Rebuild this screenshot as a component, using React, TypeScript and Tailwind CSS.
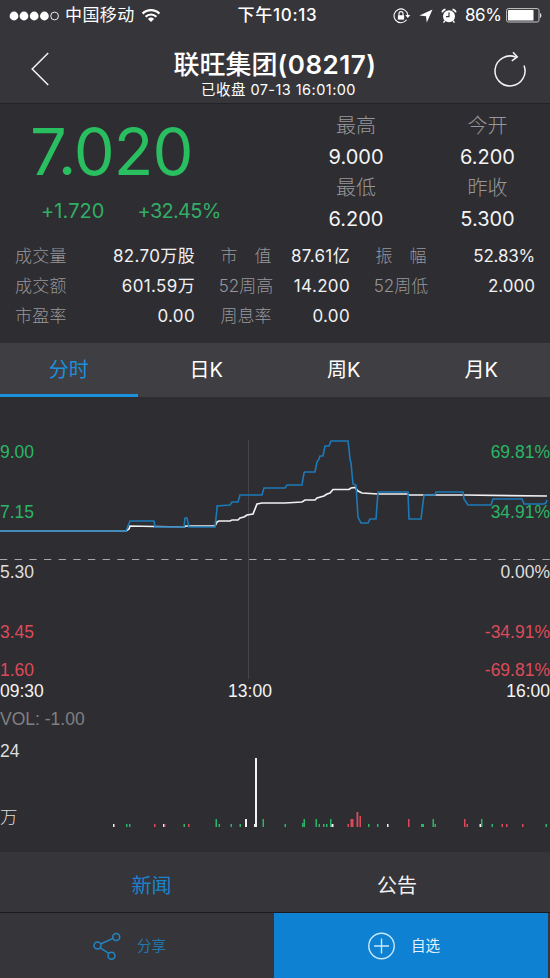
import { useState } from 'react'

const GREEN = '#2bb566'
const RED = '#dc4b5a'
const WHITE = '#f1f1f3'

const quotes = [
  { label: '最高', value: '9.000' },
  { label: '今开', value: '6.200' },
  { label: '最低', value: '6.200' },
  { label: '昨收', value: '5.300' },
]

const stats = [
  ['成交量', '82.70万股', '市\u2003值', '87.61亿', '振\u2003幅', '52.83%'],
  ['成交额', '601.59万', '52周高', '14.200', '52周低', '2.000'],
  ['市盈率', '0.00', '周息率', '0.00', '', ''],
]

const periods = ['分时', '日K', '周K', '月K']

const axisLabels = [
  { y: 61, left: '9.00', right: '69.81%', color: GREEN },
  { y: 121, left: '7.15', right: '34.91%', color: GREEN },
  { y: 181, left: '5.30', right: '0.00%', color: '#dededf' },
  { y: 241, left: '3.45', right: '-34.91%', color: RED },
  { y: 279, left: '1.60', right: '-69.81%', color: RED },
]

const priceLine =
  '0,134 126,134 130,124 154,124 155,130 184,130 185,121 187,121 189,130 215,130 217,112 217,109 230,108 232,105 238,105 240,98 241,98 262,98 264,91 285,91 287,88 302,88 304,76 305,75 315,75 317,65 319,62 320,59 323,59 325,49 329,49 331,44 348,44 349,52 350,62 351,66 353,87 356,88 358,120 361,126 368,126 370,122 376,122 378,95 408,95 409,122 421,122 424,98 435,98 436,95 463,95 464,102 468,108 491,108 493,102 522,102 524,107 544,107 546,106 547,103'

const averageLine =
  '0,134 126,134 129,132 130,129 154,129.5 184,130 186,129 215,129 217,125 219,124 230,124 232,123 238,123 240,121 244,120 247,118 253,117 257,107 262,106 285,106 302,105 305,103 315,103 317,101 324,99 327,97 330,96 333,92.5 349,92.5 351,91 355,90.5 358,94 362,96 378,97 408,97 409,98 464,98 547,99'

// x, top, width, color (bars stand on y = 430)
const volumeBars: [number, number, number, string][] = [
  [113, 427, 1.5, WHITE],
  [126, 427, 1.5, GREEN],
  [129, 427, 1.5, GREEN],
  [154, 427, 1.5, RED],
  [163, 427, 1.5, WHITE],
  [164.5, 427, 1, RED],
  [183.5, 427, 1.5, GREEN],
  [188, 427, 1.5, RED],
  [215.5, 422, 1.5, GREEN],
  [218.5, 427, 1.5, GREEN],
  [230.5, 427, 1.5, GREEN],
  [239.5, 427, 1.5, GREEN],
  [245, 422, 2, WHITE],
  [255, 361, 2, WHITE],
  [254, 427, 3, WHITE],
  [262.5, 422, 1.5, GREEN],
  [284.5, 427, 1.5, GREEN],
  [302, 426, 1.5, GREEN],
  [303.5, 422, 1.5, GREEN],
  [315.5, 422, 1.5, GREEN],
  [318.5, 427, 1.5, GREEN],
  [323, 427, 1.5, GREEN],
  [326, 427, 1.5, GREEN],
  [330, 422, 1.5, GREEN],
  [331.5, 427, 2, WHITE],
  [347.5, 427, 1.5, RED],
  [350.5, 422, 3, RED],
  [356.5, 415, 1.8, RED],
  [359.5, 419, 1.5, RED],
  [368, 427, 1.5, GREEN],
  [377, 427, 1.5, GREEN],
  [387, 427, 1.5, WHITE],
  [408, 422, 1.5, RED],
  [421, 427, 3, GREEN],
  [432.5, 422, 1.5, GREEN],
  [434.5, 427, 1.5, GREEN],
  [464, 422, 1.5, RED],
  [466.5, 427, 1.5, RED],
  [479.5, 427, 1.5, WHITE],
  [481, 422, 1.5, GREEN],
  [491.5, 427, 1.5, GREEN],
  [501.5, 427, 1.5, RED],
  [506, 427, 1.5, RED],
  [522, 427, 1.5, RED],
  [545.5, 427, 1.5, GREEN],
]

function StatusBar() {
  return (
    <div className="relative flex h-[31px] items-center text-[17px] text-white">
      <svg width="52" height="12" viewBox="0 0 52 12" className="ml-[9px]">
        <g fill="#fff">
          <circle cx="5" cy="6" r="4.4" />
          <circle cx="15" cy="6" r="4.4" />
          <circle cx="25.2" cy="6" r="4.4" />
          <circle cx="35.4" cy="6" r="4.4" />
        </g>
        <circle cx="45.6" cy="6" r="3.9" fill="none" stroke="#fff" strokeWidth="0.9" />
      </svg>
      <span className="ml-[4px] w-[70px] whitespace-nowrap pt-px tracking-[0.4px]">中国移动</span>
      <svg width="20" height="15" viewBox="0 0 20 15" className="ml-[6px]" fill="none" stroke="#fff" strokeWidth="2.2">
        <path d="M1.6 5.6a12 12 0 0 1 16.8 0" />
        <path d="M4.6 8.7a7.7 7.7 0 0 1 10.8 0" />
        <path d="M6.9 10.9a4.4 4.4 0 0 1 6.2 0L10 14z" fill="#fff" stroke="none" />
      </svg>
      <div className="absolute inset-x-0 pl-[5px] pt-px text-center font-medium tracking-[0.7px]">下午10:13</div>
      <div className="ml-auto flex items-center pr-[8px]">
        <svg width="18" height="16" viewBox="0 0 18 16" fill="none" stroke="#fff" strokeWidth="1.1">
          <path d="M13.6 11.8A6.9 6.9 0 1 1 14.8 7" />
          <path d="M12.3 7.1h5l-2.5 3z" fill="#fff" stroke="none" />
          <path d="M4.9 7.2h6.2v4.4H4.9z" fill="#fff" stroke="none" />
          <path d="M6 7.5V5.6a2 2 0 0 1 4 0v1.9" />
        </svg>
        <svg width="14" height="14" viewBox="0 0 14 14" className="ml-[8px]" fill="#fff">
          <path d="M13.5.5 7.8 13.6 7 7.2.4 6.5z" />
        </svg>
        <svg width="16" height="16" viewBox="0 0 16 16" className="ml-[8px]">
          <circle cx="8" cy="8.3" r="6" fill="#fff" />
          <path d="M1.2 4.4A4 4 0 0 1 4.5 1.3M14.8 4.4a4 4 0 0 0-3.3-3.1" stroke="#fff" strokeWidth="1.7" fill="none" />
          <path d="m4 12.7-1.5 2M12 12.7l1.5 2" stroke="#fff" strokeWidth="1.4" />
          <path d="M8 4.6v4H5" stroke="#36353a" strokeWidth="1.2" fill="none" />
        </svg>
        <span className="ml-[8px] w-[37px] whitespace-nowrap tracking-[-0.4px]">86%</span>
        <svg width="36" height="15" viewBox="0 0 36 15" className="ml-[4px]">
          <rect x="0.6" y="0.6" width="32.4" height="13.4" rx="1.8" fill="none" stroke="#c7c7ca" />
          <rect x="2" y="2" width="25.5" height="10.6" rx="0.6" fill="#fff" />
          <path d="M34.2 5c1.5.4 1.5 4.5 0 5z" fill="#fff" />
        </svg>
      </div>
    </div>
  )
}

function Header() {
  return (
    <header className="h-[104px] border-b border-[#232227] bg-[#36353a] text-white">
      <StatusBar />
      <div className="flex h-[72px] justify-between">
        <button type="button" className="self-start pl-[31px] pt-[21px]">
          <svg width="19" height="34" viewBox="0 0 19 34" fill="none" stroke="#f4f4f5" strokeWidth="1.5">
            <path d="M17.2 1 1.2 17l16 16" />
          </svg>
        </button>
        <div className="pl-[7px] pt-[17px] text-center">
          <h1 className="whitespace-nowrap text-[26px] font-medium leading-[34px]">
            联旺集团<span className="font-semibold tracking-[0.5px]">(08217)</span>
          </h1>
          <p className="whitespace-nowrap pl-[7px] text-[14.5px] leading-[16px] tracking-[0.45px]">
            已收盘 07-13 16:01:00
          </p>
        </div>
        <button type="button" className="self-start pr-[24px] pt-[20px]">
          <svg width="33" height="37" viewBox="0 0 33 37" fill="none" stroke="#f4f4f5" strokeWidth="1.5">
            <path d="M31 14.5A15 15 0 1 1 23 6.2" />
            <path d="M20 1.2 24.3 5.9 18.8 9.8" />
          </svg>
        </button>
      </div>
    </header>
  )
}

function Summary() {
  return (
    <section className="h-[239px]">
      <div className="flex h-[138px]">
        <div className="w-[306px]">
          <div className="pl-[30px] pt-[15px] text-[65px] leading-[66px] tracking-[-1px] text-[#29bf61]">7.020</div>
          <div className="flex gap-[33px] pl-[41px] pt-[13px] text-[20px] leading-[26px] text-[#32ad66]">
            <span className="tracking-[0.1px]">+1.720</span>
            <span className="tracking-[-0.7px]">+32.45%</span>
          </div>
        </div>
        <div className="grid flex-1 grid-cols-[100px_1fr] grid-rows-[62px_62px] pt-[7px] text-center">
          {quotes.map(({ label, value }, i) => (
            <div key={label} className={i % 2 ? 'pl-[19px]' : ''}>
              <div className="text-[20px] font-light leading-[31px] text-[#97979b]">{label}</div>
              <div className="text-[20px] leading-[31px] text-[#f4f4f5]">{value}</div>
            </div>
          ))}
        </div>
      </div>
      {stats.map((row) => (
        <div
          key={row[0]}
          className="grid h-[30px] grid-cols-[52px_128px_22px_58px_75px_22px_58px_105px] items-center whitespace-nowrap pl-[15px] text-[17px] text-[#f1f1f3]"
        >
          <span className="font-light tracking-[0.3px] text-[#97979b]">{row[0]}</span>
          <span className="text-right tracking-[0.35px]">{row[1]}</span>
          <span className="col-start-4 text-center font-light text-[#97979b]">{row[2]}</span>
          <span className="text-right tracking-[0.35px]">{row[3]}</span>
          <span className="col-start-7 text-center font-light text-[#97979b]">{row[4]}</span>
          <span className={`text-right ${row[5].endsWith('%') ? 'tracking-[-0.2px]' : ''}`}>{row[5]}</span>
        </div>
      ))}
    </section>
  )
}

function Chart() {
  return (
    <svg
      width="550"
      height="455"
      viewBox="0 0 550 455"
      className="block font-['Liberation_Sans','Noto_Sans_CJK_SC',sans-serif] text-[17.5px]"
    >
      <path d="M248.5 43V282" stroke="#454449" />
      <path d="M0 162.5H550" stroke="#a9a9ac" strokeWidth="1.2" strokeDasharray="7.3 7.36" />
      <polyline points={averageLine} fill="none" stroke="#f1f1f3" strokeWidth="1.7" />
      <polyline points={priceLine} fill="none" stroke="#1d7ab8" strokeWidth="1.6" />

      {axisLabels.map(({ y, left, right, color }) => (
        <g key={left} fill={color}>
          <text x="0" y={y}>{left}</text>
          <text x="550" y={y} textAnchor="end">{right}</text>
        </g>
      ))}
      <g fill="#f4f4f5">
        <text x="0" y="300">09:30</text>
        <text x="250" y="300" textAnchor="middle">13:00</text>
        <text x="550" y="300" textAnchor="end">16:00</text>
      </g>
      <text x="0" y="328" fill="#818084">VOL: -1.00</text>
      <text x="0" y="360" fill="#dededf">24</text>
      <text x="0" y="426" fill="#dededf" className="font-light">万</text>

      {volumeBars.map(([x, top, width, color]) => (
        <rect key={x} x={x} y={top} width={width} height={430 - top} fill={color} />
      ))}
    </svg>
  )
}

export default function App() {
  const [period, setPeriod] = useState('分时')

  return (
    <div className="flex h-[978px] w-[550px] flex-col overflow-hidden bg-[#2e2d31] font-['Inter','Noto_Sans_CJK_SC',sans-serif]">
      <Header />
      <Summary />

      <nav className="grid h-[54px] shrink-0 grid-cols-4 bg-[#3f3e42] text-[20px] text-white">
        {periods.map((name) => (
          <button
            key={name}
            type="button"
            onClick={() => setPeriod(name)}
            className={`border-b-[3px] pt-[2px] ${
              period === name ? 'border-[#1b90dc] text-[#1b90dc]' : 'border-transparent'
            }`}
          >
            {name}
          </button>
        ))}
      </nav>

      <Chart />

      <div className="flex h-[60px] shrink-0 items-center bg-[#36353a] pt-[7px] text-[20px]">
        <span className="w-[303px] text-center text-[#1b83cb]">新闻</span>
        <span className="w-[188px] text-center text-[#f1f1f3]">公告</span>
      </div>

      <footer className="flex h-[66px] shrink-0 border-t border-[#1b1b1e] bg-[#36353a] text-[14.5px]">
        <button type="button" className="flex w-[274px] items-center gap-[16px] pl-[93px] text-[#2377ad]">
          <svg width="28" height="28" viewBox="0 0 28 28" fill="none" stroke="#2485c2" strokeWidth="1.5">
            <circle cx="4.5" cy="13.5" r="3.5" />
            <circle cx="23.2" cy="5" r="3.5" />
            <circle cx="18.5" cy="23.7" r="3.5" />
            <path d="m7.7 12 12.3-5.6M7.2 15.8l8.7 5.5" />
          </svg>
          分享
        </button>
        <button type="button" className="mr-[2px] flex flex-1 items-center gap-[16px] bg-[#0e81d2] pl-[94px] text-[#e3f1fa]">
          <svg width="27" height="28" viewBox="0 0 27 28" fill="none" stroke="#c9e9fa" strokeWidth="1.4">
            <circle cx="13.5" cy="14" r="12.7" />
            <path d="M13.5 6.5v15M6 14h15" />
          </svg>
          自选
        </button>
      </footer>
    </div>
  )
}
